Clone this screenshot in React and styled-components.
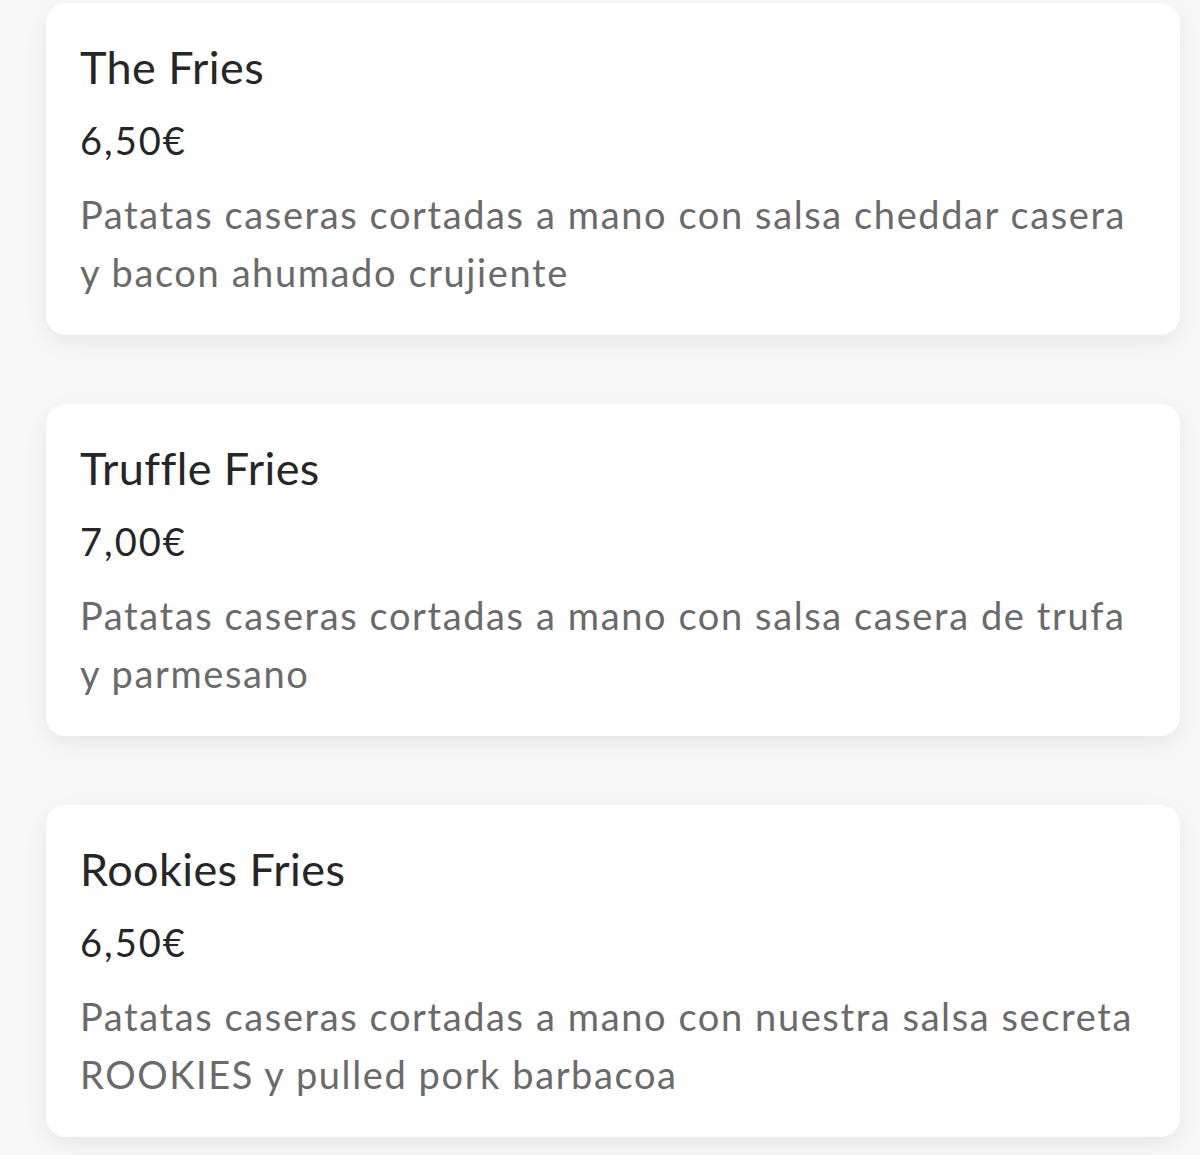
import React from "react";
import styled, { createGlobalStyle } from "styled-components";

const GlobalStyle = createGlobalStyle`
  html, body {
    margin: 0;
    padding: 0;
    background: #f8f8f8;
    font-family: "Lato", "Open Sans", sans-serif;
  }
`;

const Page = styled.div`
  display: flex;
  flex-direction: column;
  gap: 69px;
  padding: 3px 20px 40px 46px;
`;

const Card = styled.div`
  background: #ffffff;
  border-radius: 20px;
  box-shadow: 0 8px 24px rgba(0, 0, 0, 0.07);
  padding: 34px 34px 30px 34px;
  height: 332px;
  box-sizing: border-box;
`;

const Title = styled.h2`
  margin: 0;
  font-size: 45px;
  font-weight: 400;
  line-height: 60px;
  letter-spacing: 0.4px;
  color: #262626;
`;

const Price = styled.div`
  margin-top: 13px;
  font-size: 38px;
  line-height: 60px;
  letter-spacing: 2px;
  color: #262626;
`;

const Description = styled.p`
  margin: 15px 0 0;
  font-size: 38px;
  line-height: 58px;
  letter-spacing: 1.6px;
  color: #6a6a6a;
`;

const items = [
  {
    name: "The Fries",
    price: "6,50€",
    text: "Patatas caseras cortadas a mano con salsa cheddar casera y bacon ahumado crujiente",
  },
  {
    name: "Truffle Fries",
    price: "7,00€",
    text: "Patatas caseras cortadas a mano con salsa casera de trufa y parmesano",
  },
  {
    name: "Rookies Fries",
    price: "6,50€",
    text: "Patatas caseras cortadas a mano con nuestra salsa secreta ROOKIES y pulled pork barbacoa",
  },
];

export default function App() {
  return (
    <>
      <GlobalStyle />
      <Page>
        {items.map((item) => (
          <Card key={item.name}>
            <Title>{item.name}</Title>
            <Price>{item.price}</Price>
            <Description>{item.text}</Description>
          </Card>
        ))}
      </Page>
    </>
  );
}
